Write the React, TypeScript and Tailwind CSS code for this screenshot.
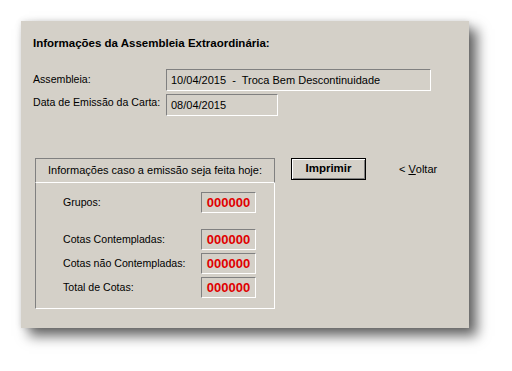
import React from 'react';

// sunken win98 style read-only field
const Field = ({ className, children }: { className: string; children: React.ReactNode }) => (
  <div
    className={`${className} flex items-center border border-t-[#808080] border-l-[#808080] border-b-white border-r-white pl-[4px] text-[11px] text-black`}
  >
    {children}
  </div>
);

const Counter = ({ label, className = '' }: { label: string; className?: string }) => (
  <div className={`flex items-center h-[21px] ${className}`}>
    <span className="w-[138px] text-[10.6px] text-black">{label}</span>
    <div className="w-[55px] h-[21px] flex items-center justify-center border border-t-[#808080] border-l-[#808080] border-b-white border-r-white text-[13px] font-bold text-[#e00000]">
      000000
    </div>
  </div>
);

export default function App() {
  return (
    <div
      className="w-[512px] h-[371px] bg-white pt-[21px] pl-[21px]"
      style={{ fontFamily: '"Liberation Sans", Arial, sans-serif' }}
    >
      <div className="w-[448px] h-[307px] bg-[#d4d0c8] pl-[12px] pt-[14px] shadow-[8px_8px_12px_rgba(0,0,0,0.6),0_0_6px_rgba(0,0,0,0.12)]">
        <h1 className="h-[16px] leading-[16px] text-[11.5px] font-bold text-black">
          Informações da Assembleia Extraordinária:
        </h1>

        <div className="mt-[18px] flex items-center">
          <span className="w-[133px] text-[10.6px] text-black -mt-[1px]">Assembleia:</span>
          <Field className="w-[265px] h-[22px]">
            <span className="whitespace-pre">10/04/2015  -  Troca Bem Descontinuidade</span>
          </Field>
        </div>

        <div className="mt-[3px] flex items-start">
          <span className="w-[133px] text-[10.6px] text-black mt-[1px]">Data de Emissão da Carta:</span>
          <Field className="w-[112px] h-[22px]">08/04/2015</Field>
        </div>

        <div className="mt-[42px] ml-[2px] flex items-start">
          <div className="w-[240px]">
            <div className="h-[25px] flex items-center justify-center border-t border-l border-r border-[#808080] border-b border-b-white text-[11px] text-black">
              Informações caso a emissão seja feita hoje:
            </div>
            <div className="h-[126px] border-l border-l-[#808080] border-r border-r-white border-b border-b-white pl-[27px] pt-[9px]">
              <Counter label="Grupos:" />
              <Counter label="Cotas Contempladas:" className="mt-[16px]" />
              <Counter label="Cotas não Contempladas:" className="mt-[3px]" />
              <Counter label="Total de Cotas:" className="mt-[3px]" />
            </div>
          </div>

          <button className="ml-[16px] w-[75px] h-[22px] border border-black bg-[#d4d0c8] shadow-[inset_1px_1px_0_#ffffff,inset_-1px_-1px_0_#808080] text-[11.5px] font-bold text-black">
            Imprimir
          </button>

          <span className="ml-[33px] h-[22px] flex items-center text-[11px] text-black">
            &lt; <span className="underline ml-[3px]">V</span>oltar
          </span>
        </div>
      </div>
    </div>
  );
}
